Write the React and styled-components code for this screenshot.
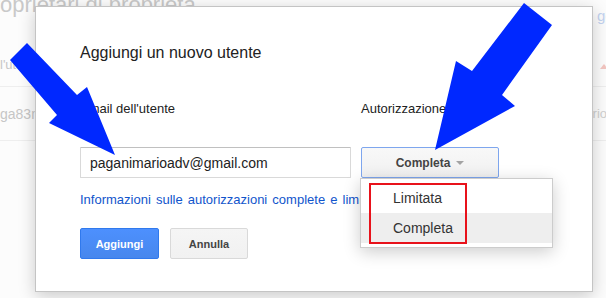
import React from 'react';
import styled, { createGlobalStyle } from 'styled-components';

const GlobalStyle = createGlobalStyle`
  html, body {
    margin: 0;
    padding: 0;
  }
  body {
    font-family: 'Liberation Sans', Arial, sans-serif;
    background: #fcfcfc;
  }
`;

const Screen = styled.div`
  position: relative;
  width: 606px;
  height: 298px;
  overflow: hidden;
  background: #fcfcfc;
`;

/* faded page behind the modal */
const BgHeader = styled.div`
  display: flex;
  justify-content: space-between;
  align-items: flex-start;
  height: 43px;
`;

const BgTitle = styled.div`
  margin: -6px 0 0 -22px;
  font-size: 22px;
  line-height: 22px;
  color: #c9c9c9;
  white-space: nowrap;
`;

const BgLink = styled.div`
  width: 9px;
  margin-top: 7px;
  font-size: 15px;
  color: #c3d3f0;
  white-space: nowrap;
`;

const BgRow = styled.div`
  display: flex;
  justify-content: space-between;
  align-items: center;
  box-sizing: border-box;
  height: ${p => p.$h}px;
  border-bottom: 1px solid #eeeeee;
`;

const BgCell = styled.span`
  font-size: ${p => p.$size}px;
  color: #c6c6c6;
  white-space: nowrap;
`;

const BgRight = styled.div`
  display: flex;
  justify-content: flex-end;
  width: 16px;
  margin-right: -1px;
  font-size: 13px;
  color: #d0d0d0;
  white-space: nowrap;
`;

const BgTriangle = styled.span`
  width: 0;
  height: 0;
  margin: 4px -2px 0 0;
  border-left: 4px solid transparent;
  border-right: 4px solid transparent;
  border-bottom: 5px solid #f3c6c1;
`;

/* modal */
const Dialog = styled.div`
  position: absolute;
  left: 35px;
  top: 6px;
  width: 558px;
  height: 286px;
  box-sizing: border-box;
  padding: 37px 44px 0;
  background: #fff;
  border: 1px solid #c4c4c4;
  box-shadow: 0 4px 16px rgba(0, 0, 0, 0.2);
`;

const Title = styled.h2`
  margin: 0;
  font-size: 16px;
  line-height: 18px;
  font-weight: normal;
  color: #222;
`;

const Fields = styled.div`
  display: flex;
  gap: 10px;
  margin-top: 39px;
`;

const Field = styled.div`
  display: flex;
  flex-direction: column;
`;

const Label = styled.label`
  margin-bottom: 31px;
  font-size: 13px;
  line-height: 15px;
  color: #222;
`;

const EmailInput = styled.input`
  width: 271px;
  height: 31px;
  box-sizing: border-box;
  margin: 0;
  padding: 0 9px;
  border: 1px solid #d9d9d9;
  border-top-color: #c0c0c0;
  border-radius: 1px;
  font-family: 'Liberation Sans', Arial, sans-serif;
  font-size: 14px;
  color: #222;
  outline: none;
`;

const SelectWrap = styled.div`
  position: relative;
`;

const SelectButton = styled.div`
  display: flex;
  align-items: center;
  justify-content: center;
  gap: 6px;
  width: 138px;
  height: 31px;
  box-sizing: border-box;
  border: 1px solid #7ea6ee;
  border-radius: 2px;
  background: linear-gradient(#f8f8f8, #f1f1f1);
  font-size: 12px;
  font-weight: bold;
  color: #444;
`;

const Caret = styled.span`
  width: 0;
  height: 0;
  border-left: 4px solid transparent;
  border-right: 4px solid transparent;
  border-top: 4px solid #a3a3a3;
`;

const Menu = styled.ul`
  position: absolute;
  left: -1px;
  top: 100%;
  z-index: 2;
  width: 193px;
  box-sizing: border-box;
  margin: 0;
  padding: 4px 0;
  list-style: none;
  background: #fff;
  border: 1px solid rgba(0, 0, 0, 0.2);
  box-shadow: 0 4px 16px rgba(0, 0, 0, 0.2);
`;

const MenuItem = styled.li`
  height: 30px;
  padding-left: 32px;
  line-height: 30px;
  font-size: 14px;
  color: #333;
  background: ${p => (p.$active ? '#eeeeee' : 'transparent')};
`;

const InfoLink = styled.a`
  display: block;
  margin-top: 14px;
  font-size: 13px;
  line-height: 15px;
  word-spacing: 1.5px;
  color: #15c;
  text-decoration: none;
  white-space: nowrap;
`;

const Actions = styled.div`
  display: flex;
  gap: 11px;
  margin-top: 21px;
`;

const Button = styled.button`
  width: ${p => p.$w}px;
  height: 31px;
  box-sizing: border-box;
  margin: 0;
  padding: 0;
  border-radius: 2px;
  border: 1px solid ${p => (p.$primary ? '#3079ed' : '#d9d9d9')};
  background: ${p =>
    p.$primary ? 'linear-gradient(#4d90fe, #4787ed)' : 'linear-gradient(#f5f5f5, #f1f1f1)'};
  color: ${p => (p.$primary ? '#fff' : '#444')};
  font-family: 'Liberation Sans', Arial, sans-serif;
  font-size: 11px;
  font-weight: bold;
`;

/* annotations drawn on top of the screenshot */
const RedBox = styled.div`
  position: absolute;
  left: 369px;
  top: 183px;
  width: 98px;
  height: 61px;
  box-sizing: border-box;
  border: 2px solid #e8121b;
  z-index: 3;
`;

const Arrows = styled.svg`
  position: absolute;
  left: 0;
  top: 0;
  z-index: 4;
  pointer-events: none;
`;

export default function App() {
  return (
    <>
      <GlobalStyle />
      <Screen>
        <BgHeader>
          <BgTitle>Proprietari di proprietà</BgTitle>
          <BgLink>gestisci</BgLink>
        </BgHeader>
        <BgRow $h={44}>
          <BgCell $size={13}>l'utente</BgCell>
          <BgTriangle />
        </BgRow>
        <BgRow $h={54}>
          <BgCell $size={14}>ga83mario@gmail.com</BgCell>
          <BgRight>Proprietario</BgRight>
        </BgRow>

        <Dialog>
          <Title>Aggiungi un nuovo utente</Title>
          <Fields>
            <Field>
              <Label>Email dell'utente</Label>
              <EmailInput readOnly value="paganimarioadv@gmail.com" />
            </Field>
            <Field>
              <Label>Autorizzazione</Label>
              <SelectWrap>
                <SelectButton>
                  Completa <Caret />
                </SelectButton>
                <Menu>
                  <MenuItem>Limitata</MenuItem>
                  <MenuItem $active>Completa</MenuItem>
                </Menu>
              </SelectWrap>
            </Field>
          </Fields>
          <InfoLink href="#">Informazioni sulle autorizzazioni complete e limitate</InfoLink>
          <Actions>
            <Button $primary $w={79}>Aggiungi</Button>
            <Button $w={78}>Annulla</Button>
          </Actions>
        </Dialog>

        <RedBox />
        <Arrows width="606" height="298" viewBox="0 0 606 298">
          <polygon fill="#0028ff" points="27,43 77,95 87,87 115,155 49,123 57,115 10,60" />
          <polygon fill="#0028ff" points="524,3 552,25 502,95 515,106 435,150 456,61 472,71" />
        </Arrows>
      </Screen>
    </>
  );
}
